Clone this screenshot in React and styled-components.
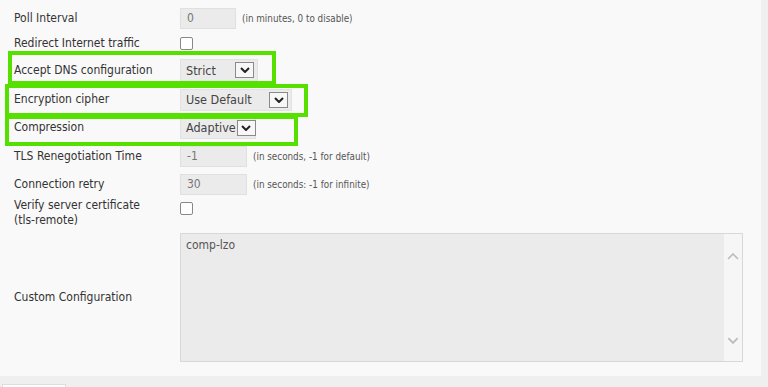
import React from 'react';
import styled, { createGlobalStyle } from 'styled-components';

const GlobalStyle = createGlobalStyle`
  html, body { margin: 0; padding: 0; background: #efefef; }
  body { font-family: "DejaVu Sans Condensed", "DejaVu Sans", sans-serif; color: #333; }
`;

const Page = styled.div`
  width: 768px;
  height: 387px;
  overflow: hidden;
  background: #efefef;
`;

const Panel = styled.div`
  position: relative;
  width: 761px;
  height: 376px;
  box-sizing: border-box;
  padding-top: 4px;
  background: #f9f9f9;
`;

const Row = styled.div`
  display: grid;
  grid-template-columns: 166px 1fr;
  align-items: ${props => (props.$top ? 'start' : 'center')};
  height: ${props => props.$h}px;
  padding-left: 14px;
  box-sizing: border-box;
`;

const Label = styled.div`
  font-size: 12px;
  line-height: 15px;
  color: #333;
`;

const Control = styled.div`
  display: flex;
  align-items: center;
  gap: 6px;
  padding-top: ${props => props.$pt || 0}px;
`;

const TextInput = styled.div`
  width: ${props => props.$w}px;
  height: 21px;
  box-sizing: border-box;
  padding: 0 6px;
  display: flex;
  align-items: center;
  background: #ebebeb;
  border: 1px solid #e0e0e0;
  font-size: 12px;
  color: #777;
`;

const Hint = styled.span`
  font-size: 9.8px;
  color: #555;
`;

const Checkbox = styled.div`
  width: 13px;
  height: 13px;
  box-sizing: border-box;
  background: #fff;
  border: 1px solid #888;
  border-radius: 2px;
`;

const Select = styled.div`
  width: ${props => props.$w}px;
  height: 22px;
  box-sizing: border-box;
  padding: 0 3px 0 5px;
  display: flex;
  align-items: center;
  justify-content: space-between;
  gap: 1px;
  background: #ebebeb;
  border: 1px solid #e2e2e2;
  font-size: 12.5px;
  color: #444;
  white-space: nowrap;
`;

const ArrowBox = styled.div`
  flex: none;
  width: 19px;
  height: 16px;
  box-sizing: border-box;
  display: flex;
  align-items: center;
  justify-content: center;
  background: #f7f7f7;
  border: 1px solid #8a8a8a;
`;

const TextArea = styled.div`
  width: 563px;
  height: 129px;
  box-sizing: border-box;
  display: flex;
  background: #ebebeb;
  border: 1px solid #d8d8d8;
`;

const AreaText = styled.div`
  flex: 1;
  padding: 4px 5px;
  font-size: 12px;
  color: #555;
`;

const ScrollTrack = styled.div`
  width: 18px;
  display: flex;
  flex-direction: column;
  justify-content: space-between;
  align-items: center;
  padding: 19px 0 17px;
  background: #f6f6f6;
`;

const Highlight = styled.div`
  position: absolute;
  left: ${props => props.$x}px;
  top: ${props => props.$y}px;
  width: ${props => props.$w}px;
  height: ${props => props.$h}px;
  box-sizing: border-box;
  border: 4px solid #55e000;
  pointer-events: none;
`;

const Footer = styled.div`
  height: 11px;
  padding: 8px 0 0 2px;
  box-sizing: border-box;
`;

const Tab = styled.div`
  width: 62px;
  height: 10px;
  background: #fff;
  border: 1px solid #ddd;
  border-bottom: none;
`;

const Chevron = ({ color = '#222', w = 10, h = 6, sw = 2 }) => (
  <svg width={w} height={h} viewBox="0 0 10 6">
    <path d="M1 1 L5 5 L9 1" fill="none" stroke={color} strokeWidth={sw} />
  </svg>
);

const ChevronUp = () => (
  <svg width="12" height="7" viewBox="0 0 12 7">
    <path d="M1 6 L6 1 L11 6" fill="none" stroke="#bbb" strokeWidth="1.6" />
  </svg>
);

const Dropdown = ({ width, value }) => (
  <Select $w={width}>
    <span>{value}</span>
    <ArrowBox>
      <Chevron />
    </ArrowBox>
  </Select>
);

export default function App() {
  return (
    <Page>
      <GlobalStyle />
      <Panel>
        <Row $h={28}>
          <Label>Poll Interval</Label>
          <Control>
            <TextInput $w={56}>0</TextInput>
            <Hint>(in minutes, 0 to disable)</Hint>
          </Control>
        </Row>
        <Row $h={22}>
          <Label>Redirect Internet traffic</Label>
          <Control>
            <Checkbox />
          </Control>
        </Row>
        <Row $h={32}>
          <Label>Accept DNS configuration</Label>
          <Control>
            <Dropdown width={78} value="Strict" />
          </Control>
        </Row>
        <Row $h={27}>
          <Label>Encryption cipher</Label>
          <Control>
            <Dropdown width={112} value="Use Default" />
          </Control>
        </Row>
        <Row $h={29}>
          <Label>Compression</Label>
          <Control>
            <Dropdown width={76} value="Adaptive" />
          </Control>
        </Row>
        <Row $h={28}>
          <Label>TLS Renegotiation Time</Label>
          <Control>
            <TextInput $w={67}>-1</TextInput>
            <Hint>(in seconds, -1 for default)</Hint>
          </Control>
        </Row>
        <Row $h={28}>
          <Label>Connection retry</Label>
          <Control>
            <TextInput $w={67}>30</TextInput>
            <Hint>(in seconds: -1 for infinite)</Hint>
          </Control>
        </Row>
        <Row $h={31} $top>
          <Label>
            Verify server certificate
            <br />
            (tls-remote)
          </Label>
          <Control $pt={4}>
            <Checkbox />
          </Control>
        </Row>
        <Row $h={137}>
          <Label>Custom Configuration</Label>
          <Control>
            <TextArea>
              <AreaText>comp-lzo</AreaText>
              <ScrollTrack>
                <ChevronUp />
                <Chevron color="#bbb" w={12} h={7} sw={1.6} />
              </ScrollTrack>
            </TextArea>
          </Control>
        </Row>
        <Highlight $x={8} $y={51} $w={268} $h={34} />
        <Highlight $x={5} $y={84} $w={303} $h={33} />
        <Highlight $x={5} $y={115} $w={293} $h={31} />
      </Panel>
      <Footer>
        <Tab />
      </Footer>
    </Page>
  );
}
